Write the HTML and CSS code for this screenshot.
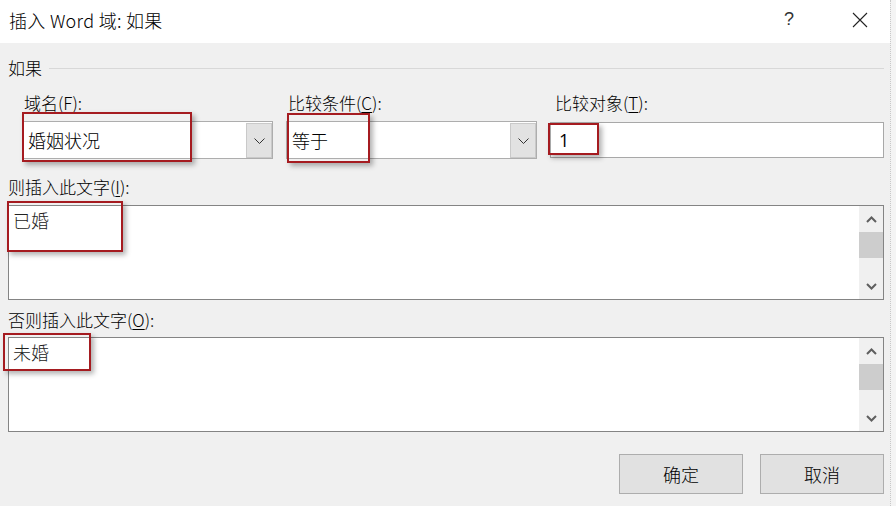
FILE: index.html
```html
<!DOCTYPE html>
<html lang="zh-CN">
<head>
<meta charset="utf-8">
<title>插入 Word 域: 如果</title>
<link rel="stylesheet" href="styles.css">
</head>
<body>
<div class="window">
  <div class="titlebar">
    <span class="title">插入 Word 域: 如果</span>
    <span class="help">?</span>
    <svg class="close" width="16" height="16" viewBox="0 0 16 16"><path d="M1 1 L15 15 M15 1 L1 15" stroke="#222" stroke-width="1.1" fill="none"/></svg>
  </div>
  <div class="content">
    <div class="group-head"><span>如果</span><div class="rule"></div></div>
    <div class="fields">
      <div class="field">
        <div class="flabel">域名(<u>F</u>):</div>
        <div class="combo">
          <span class="val">婚姻状况</span>
          <span class="drop"><svg width="11" height="6" viewBox="0 0 11 6"><path d="M0.5 0.5 L5.5 5.5 L10.5 0.5" stroke="#333" stroke-width="1" fill="none"/></svg></span>
        </div>
      </div>
      <div class="field">
        <div class="flabel">比较条件(<u>C</u>):</div>
        <div class="combo">
          <span class="val">等于</span>
          <span class="drop"><svg width="11" height="6" viewBox="0 0 11 6"><path d="M0.5 0.5 L5.5 5.5 L10.5 0.5" stroke="#333" stroke-width="1" fill="none"/></svg></span>
        </div>
      </div>
      <div class="field">
        <div class="flabel flabel-wide">比较对象(<u>T</u>):</div>
        <div class="input"><span class="val val-num">1</span></div>
      </div>
    </div>
    <div class="lbl lbl-first">则插入此文字(<u>I</u>):</div>
    <div class="textarea">
      <div class="ta-text">已婚</div>
      <div class="scrollbar">
        <div class="sb-btn"><svg width="11" height="7" viewBox="0 0 11 7"><path d="M1 6 L5.5 1.5 L10 6" stroke="#5f5f5f" stroke-width="2" fill="none"/></svg></div>
        <div class="sb-thumb"></div>
        <div class="sb-space"></div>
        <div class="sb-btn"><svg width="11" height="7" viewBox="0 0 11 7"><path d="M1 1 L5.5 5.5 L10 1" stroke="#5f5f5f" stroke-width="2" fill="none"/></svg></div>
      </div>
    </div>
    <div class="lbl lbl-second">否则插入此文字(<u>O</u>):</div>
    <div class="textarea textarea-second">
      <div class="ta-text">未婚</div>
      <div class="scrollbar">
        <div class="sb-btn"><svg width="11" height="7" viewBox="0 0 11 7"><path d="M1 6 L5.5 1.5 L10 6" stroke="#5f5f5f" stroke-width="2" fill="none"/></svg></div>
        <div class="sb-thumb"></div>
        <div class="sb-space"></div>
        <div class="sb-btn"><svg width="11" height="7" viewBox="0 0 11 7"><path d="M1 1 L5.5 5.5 L10 1" stroke="#5f5f5f" stroke-width="2" fill="none"/></svg></div>
      </div>
    </div>
    <div class="buttons">
      <button class="btn">确定</button>
      <button class="btn">取消</button>
    </div>
  </div>
  <div class="ann ann1"></div>
  <div class="ann ann2"></div>
  <div class="ann ann3"></div>
  <div class="ann ann4"></div>
  <div class="ann ann5"></div>
</div>
</body>
</html>
```
FILE: styles.css
```css
* { box-sizing: border-box; }
html, body { margin: 0; padding: 0; }
body {
  width: 896px;
  height: 506px;
  overflow: hidden;
  background: #f4f4f4;
  font-family: "Noto Sans CJK SC", "Noto Sans", sans-serif;
  font-weight: 300;
  color: #000;
}
.window {
  position: relative;
  width: 891px;
  height: 506px;
  background: #f0f0f0;
  border-right: 1px dotted #c9c9c9;
}
.titlebar {
  height: 43px;
  background: #fff;
  display: flex;
  align-items: flex-start;
  padding: 8px 0 0 9px;
}
.title {
  font-size: 18px;
  letter-spacing: 0.3px;
  line-height: 24px;
  flex: 1;
}
.help {
  font-size: 18px;
  line-height: 22px;
  color: #333;
  margin-right: 58px;
  font-family: "Liberation Sans", sans-serif;
}
.close {
  margin-top: 4px;
  margin-right: 22px;
}
.content {
  padding: 0 6px 0 8px;
}
.group-head {
  margin-top: 13px;
  height: 24px;
  display: flex;
  align-items: center;
  font-size: 17px;
  line-height: 24px;
}
.rule {
  flex: 1;
  height: 1px;
  background: #d8d8d8;
  margin-left: 7px;
}
.fields {
  margin-top: 11px;
  margin-left: 14px;
  display: grid;
  grid-template-columns: 251px 251px 334px;
  column-gap: 13px;
}
.flabel {
  font-size: 17px;
  line-height: 24px;
  padding-left: 2px;
}
.flabel-wide { padding-left: 5px; }
u { text-underline-offset: 2px; text-decoration-thickness: 1px; }
.combo {
  margin-top: 6px;
  height: 38px;
  background: #fff;
  border: 1px solid #adadad;
  display: flex;
  align-items: center;
  padding-left: 5px;
}
.val {
  flex: 1;
  font-size: 18px;
  line-height: 24px;
}
.val-num {
  font-family: "Open Sans", "Noto Sans", sans-serif;
  font-weight: 400;
}
.drop {
  width: 26px;
  height: 35px;
  margin-top: 1px;
  background: #e2e2e2;
  border: 1px solid #c9c9c9;
  display: flex;
  align-items: center;
  justify-content: center;
}
.input {
  margin-top: 7px;
  height: 36px;
  background: #fff;
  border: 1px solid #a8a8a8;
  display: flex;
  align-items: center;
  padding-left: 8px;
}
.lbl {
  font-size: 17px;
  line-height: 24px;
}
.lbl-first { margin-top: 16px; }
.lbl-second { margin-top: 8px; }
.textarea {
  margin-top: 6px;
  height: 95px;
  background: #fff;
  border: 1px solid #848484;
  display: flex;
}
.textarea-second { margin-top: 5px; }
.ta-text {
  flex: 1;
  padding: 2px 0 0 4px;
  font-size: 18px;
  line-height: 24px;
  color: #222;
}
.scrollbar {
  width: 24px;
  background: #f0f0f0;
  display: flex;
  flex-direction: column;
}
.sb-btn {
  height: 26px;
  display: flex;
  align-items: center;
  justify-content: center;
}
.sb-thumb {
  height: 26px;
  background: #cdcdcd;
}
.sb-space { flex: 1; }
.buttons {
  margin-top: 22px;
  display: flex;
  justify-content: flex-end;
  gap: 17px;
}
.btn {
  width: 124px;
  height: 40px;
  background: #e1e1e1;
  border: 1px solid #adadad;
  font-family: "Noto Sans CJK SC", sans-serif;
  font-weight: 300;
  font-size: 18px;
  color: #000;
  padding: 0;
}
.ann {
  position: absolute;
  border: 2px solid #a51b20;
  box-shadow: 3px 3px 5px rgba(0, 0, 0, 0.3);
}
.ann1 { left: 22px; top: 112px; width: 170px; height: 50px; }
.ann2 { left: 287px; top: 113px; width: 83px; height: 50px; }
.ann3 { left: 548px; top: 123px; width: 51px; height: 32px; }
.ann4 { left: 7px; top: 201px; width: 116px; height: 51px; }
.ann5 { left: 3px; top: 333px; width: 88px; height: 38px; }
```
